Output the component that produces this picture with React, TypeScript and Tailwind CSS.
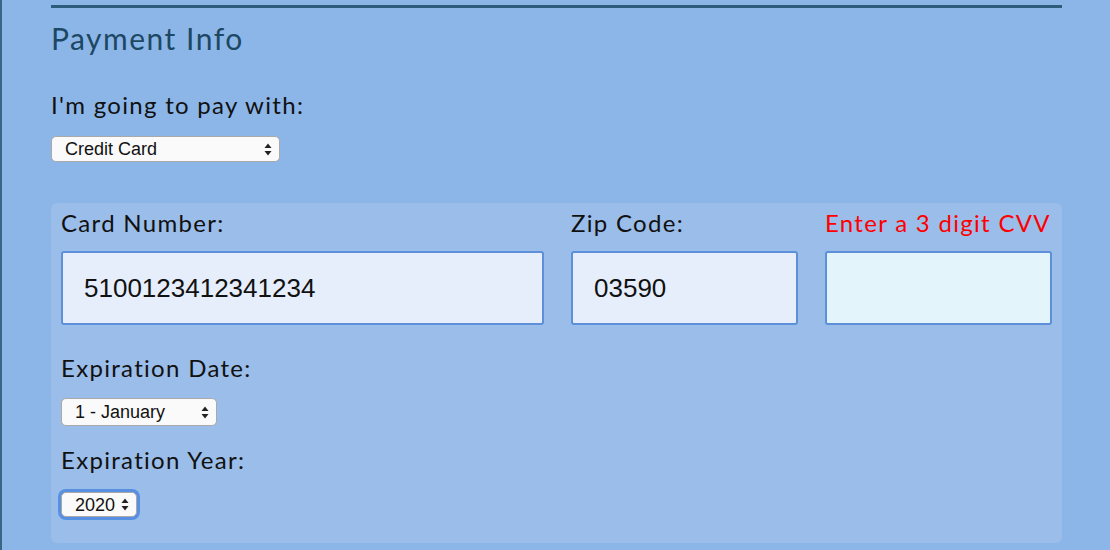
import React from "react";

function Arrows() {
  return (
    <svg width="8" height="13" viewBox="0 0 8 13" className="shrink-0">
      <path d="M4 0.5L7.5 5H0.5z" fill="#222" />
      <path d="M4 12.5L7.5 8H0.5z" fill="#222" />
    </svg>
  );
}

function FakeSelect({
  value,
  className,
  focused,
}: {
  value: string;
  className: string;
  focused?: boolean;
}) {
  return (
    <div
      className={`flex items-center justify-between bg-[#fafafa] border border-[#a9a9a9] rounded-[5px] pl-[13px] pr-[7px] text-[18px] leading-none text-[#111] ${
        focused ? "ring-[3px] ring-[#3b7de0]/70" : ""
      } ${className}`}
      style={{ fontFamily: '"Liberation Sans", Arial, sans-serif' }}
    >
      <span>{value}</span>
      <Arrows />
    </div>
  );
}

export default function App() {
  const labelFont = { fontFamily: 'Lato, "Noto Sans", sans-serif' };
  const inputFont = { fontFamily: '"Liberation Sans", Arial, sans-serif' };
  const label = "text-[24px] leading-[30px] tracking-[1.3px] text-[#111]";
  const field =
    "mt-[13px] h-[74px] border-2 border-[#5d90d8] rounded-[3px] flex items-center pl-[21px] text-[26px] text-[#111]";

  return (
    <div className="w-[1110px] h-[550px] overflow-hidden bg-[#8cb6e8] border-l-2 border-[#3a6786]">
      <div className="pl-[49px] pr-[48px]" style={labelFont}>
        <div className="mt-[5px] h-[3px] bg-[#2d5d7d]" />

        {/* Header */}
        <h2 className="mt-[12px] text-[30px] leading-[36px] tracking-[1.5px] text-[#1d4863]">
          Payment Info
        </h2>

        <p className={`mt-[34px] ${label}`}>I'm going to pay with:</p>
        <FakeSelect value="Credit Card" className="mt-[16px] w-[229px] h-[26px]" />

        {/* Card panel */}
        <div className="mt-[41px] bg-[#9abde9] rounded-[6px] pl-[10px] pr-[10px] pt-[5px] pb-[26px]">
          <div className="grid grid-cols-[483px_227px_227px] justify-between">
            <label className={label}>Card Number:</label>
            <label className={label}>Zip Code:</label>
            <label className={`${label} !text-[#ff0000]`}>Enter a 3 digit CVV</label>
            <div className={`${field} bg-[#e6eefc]`} style={inputFont}>
              5100123412341234
            </div>
            <div className={`${field} bg-[#e6eefc]`} style={inputFont}>
              03590
            </div>
            <div className={`${field} bg-[#e3f4fa]`} />
          </div>

          <p className={`mt-[28px] ${label}`}>Expiration Date:</p>
          <FakeSelect value="1 - January" className="mt-[15px] w-[156px] h-[28px]" />

          <p className={`mt-[19px] ${label}`}>Expiration Year:</p>
          <FakeSelect
            value="2020"
            focused
            className="mt-[17px] w-[76px] h-[25px] pl-[12px] pr-[5px]"
          />
        </div>
      </div>
    </div>
  );
}
